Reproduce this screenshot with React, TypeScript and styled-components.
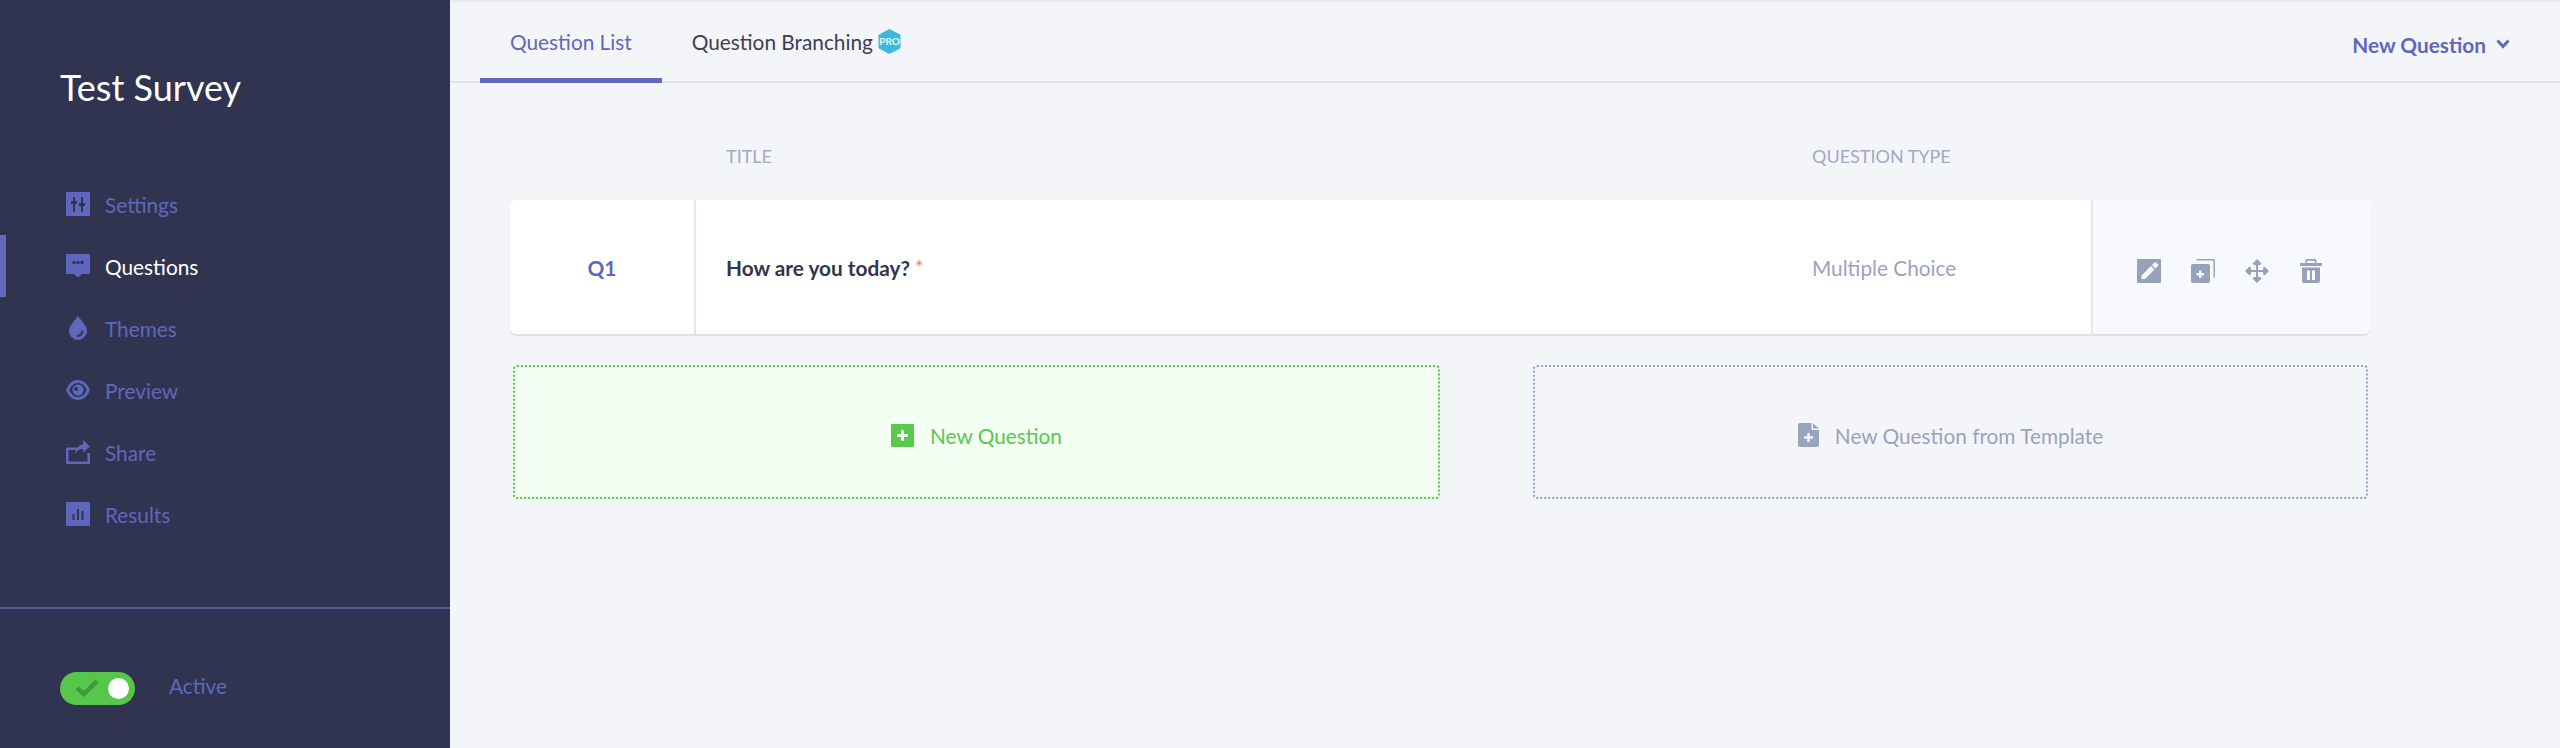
import { ReactNode } from 'react'
import styled, { createGlobalStyle } from 'styled-components'

const GlobalStyle = createGlobalStyle`
  html, body {
    margin: 0;
    padding: 0;
    background: #f4f5f9;
  }
  body {
    font-family: Lato, "Open Sans", sans-serif;
    overflow: hidden;
  }
`

const Page = styled.div`
  display: flex;
  width: 100%;
  height: 748px;
  overflow: hidden;
`

const Sidebar = styled.aside`
  display: flex;
  flex-direction: column;
  flex: 0 0 450px;
  background: #313450;
`

const SurveyTitle = styled.h1`
  margin: 0;
  padding: 65px 0 0 60px;
  font-size: 36px;
  line-height: 44px;
  font-weight: 400;
  color: #ffffff;
`

const Nav = styled.nav`
  display: flex;
  flex-direction: column;
  padding-top: 64px;
  flex: 1;
`

const NavItem = styled.a<{ $active?: boolean }>`
  display: flex;
  align-items: center;
  gap: 15px;
  height: 62px;
  padding-left: ${p => (p.$active ? 60 : 66)}px;
  border-left: ${p => (p.$active ? '6px solid #6469bb' : 'none')};
  font-size: 20.8px;
  color: ${p => (p.$active ? '#ffffff' : '#5f68bb')};
  svg {
    flex: 0 0 24px;
    color: #5f67bd;
  }
`

const SidebarFooter = styled.div`
  display: flex;
  align-items: center;
  gap: 34px;
  height: 141px;
  padding: 19px 0 0 60px;
  border-top: 2px solid #575c96;
  box-sizing: border-box;
  font-size: 20.8px;
  color: #5f68bb;
`

const ActiveLabel = styled.span`
  padding-bottom: 5px;
`

const Toggle = styled.div`
  display: flex;
  align-items: center;
  justify-content: space-between;
  width: 75px;
  height: 33px;
  padding: 0 6px 0 15px;
  box-sizing: border-box;
  border-radius: 17px;
  background: #56c74a;
`

const ToggleKnob = styled.span`
  width: 21px;
  height: 21px;
  border-radius: 50%;
  background: #ffffff;
`

const Main = styled.main`
  display: flex;
  flex-direction: column;
  flex: 1;
  min-width: 0;
  box-shadow: inset 0 2px 0 #e9eaf1;
`

const TabBar = styled.div`
  display: flex;
  align-items: stretch;
  height: 83px;
  padding: 0 50px 0 30px;
  box-sizing: border-box;
  box-shadow: inset 0 -2px 0 #e1e2ea;
`

const Tab = styled.a<{ $active?: boolean }>`
  display: flex;
  align-items: center;
  gap: 5px;
  padding: 5px 30px 0;
  border-bottom: 5px solid ${p => (p.$active ? '#6469bb' : 'transparent')};
  font-size: 20.8px;
  color: ${p => (p.$active ? '#5f67bd' : '#3c3f52')};
`

const NewMenu = styled.a`
  display: flex;
  align-items: center;
  gap: 10px;
  margin-left: auto;
  padding-top: 5px;
  font-size: 20.8px;
  font-weight: 700;
  color: #5f67bd;
`

const Content = styled.div`
  padding: 63px 190px 0 60px;
`

const Columns = styled.div`
  display: grid;
  grid-template-columns: 186px 1116px 279px 279px;
`

const HeaderLabel = styled.div<{ $inset?: number }>`
  grid-column: ${p => (p.$inset ? 3 : 2)};
  padding-left: ${p => (p.$inset ? 0 : 30)}px;
  font-size: 18px;
  line-height: 20px;
  color: #a2a9c2;
`

const Card = styled(Columns)`
  height: 134px;
  margin-top: 34px;
  border-radius: 6px;
  background: #ffffff;
  box-shadow: 0 2px 0 #dfe0e8;
`

const NumberCell = styled.div`
  display: flex;
  align-items: center;
  justify-content: center;
  border-right: 2px solid #e6e7ee;
  font-size: 20.8px;
  font-weight: 700;
  color: #5f67bd;
`

const TitleCell = styled.div`
  display: flex;
  align-items: center;
  padding-left: 30px;
  font-size: 20.8px;
  font-weight: 700;
  color: #33364b;
`

const Required = styled.span`
  margin: -2px 0 0 5px;
  font-size: 20px;
  font-weight: 400;
  color: #f47b74;
`

const TypeCell = styled.div`
  display: flex;
  align-items: center;
  font-size: 20.8px;
  color: #9aa3bd;
`

const ActionsCell = styled.div`
  display: flex;
  align-items: center;
  gap: 30px;
  padding: 8px 0 0 44px;
  border-left: 2px solid #e6e7ee;
  border-radius: 0 6px 6px 0;
  background: #f8f9fd;
  color: #98a1ba;
`

const AddRow = styled.div`
  display: grid;
  grid-template-columns: 927px 835px;
  justify-content: space-between;
  margin-top: 31px;
  padding: 0 2px 0 3px;
`

const AddButton = styled.button<{ $primary?: boolean }>`
  display: flex;
  align-items: center;
  justify-content: center;
  gap: 16px;
  height: 134px;
  padding: 6px 0 0;
  border: 2px dotted ${p => (p.$primary ? '#56c74a' : '#9aa3bd')};
  border-radius: 4px;
  background: ${p => (p.$primary ? '#f4fff3' : 'transparent')};
  font-family: inherit;
  font-size: 20.8px;
  color: ${p => (p.$primary ? '#5ac84e' : '#9aa3bd')};
`

function Glyph({ size = 24, children }: { size?: number; children: ReactNode }) {
  return (
    <svg width={size} height={size} viewBox="0 0 24 24" fill="currentColor" fillRule="evenodd">
      {children}
    </svg>
  )
}

const SettingsIcon = () => (
  <Glyph>
    <path d="M1 0h22a1 1 0 0 1 1 1v22a1 1 0 0 1-1 1H1a1 1 0 0 1-1-1V1a1 1 0 0 1 1-1ZM7 5v4H5v3h2v8h2v-8h2V9H9V5H7Zm8 0v6h-2v3h2v6h2v-6h2v-3h-2V5h-2Z" />
  </Glyph>
)

const QuestionsIcon = () => (
  <Glyph>
    <path d="M1 0h22a1 1 0 0 1 1 1v18a1 1 0 0 1-1 1h-7l-4 3.500L8 20H1a1 1 0 0 1-1-1V1a1 1 0 0 1 1-1Zm5.500 7v3h3V7h-3Zm4 0v3h3V7h-3Zm4 0v3h3V7h-3Z" />
  </Glyph>
)

const ThemesIcon = () => (
  <Glyph>
    <path d="M12 0c3 4.500 9 9.500 9 15a9 9 0 0 1-18 0C3 9.500 9 4.500 12 0Zm3.500 14.500c0 2.500-1.600 4.200-4.500 4.500v2c4 0 6.500-2.800 6.500-6.500h-2Z" />
  </Glyph>
)

const PreviewIcon = () => (
  <Glyph>
    <path d="M12 2c5.500 0 9.500 4 12 10-2.500 6-6.500 10-12 10S2.500 18 0 12C2.500 6 6.500 2 12 2Zm0 3c-3.800 0-6.800 2.600-8.800 7 2 4.400 5 7 8.800 7s6.800-2.600 8.800-7c-2-4.400-5-7-8.800-7Zm0 1.500a5.500 5.500 0 1 1 0 11 5.500 5.500 0 0 1 0-11Zm-2 2.500a2 2 0 1 0 0 4 2 2 0 0 0 0-4Z" />
  </Glyph>
)

const ShareIcon = () => (
  <Glyph>
    <path d="M0 7.500h11V10H2.500v11.500h19V13H24v10a1 1 0 0 1-1 1H1a1 1 0 0 1-1-1V7.500Z" />
    <path d="M17 0l7 6.500-7 6V9c-3.500 0-6 1.500-8 5.500C9.500 9 12.500 5 17 4.500V0Z" />
  </Glyph>
)

const ResultsIcon = () => (
  <Glyph>
    <path d="M1 0h22a1 1 0 0 1 1 1v22a1 1 0 0 1-1 1H1a1 1 0 0 1-1-1V1a1 1 0 0 1 1-1Zm10 7v11h2V7h-2ZM6.500 12v6h2v-6h-2Zm9-3v9h2V9h-2Z" />
  </Glyph>
)

const EditIcon = () => (
  <Glyph>
    <path d="M1 0h22a1 1 0 0 1 1 1v22a1 1 0 0 1-1 1H1a1 1 0 0 1-1-1V1a1 1 0 0 1 1-1Zm16.500 3.500-2.500 2.500 3.500 3.500L21 7a1 1 0 0 0 0-1.500l-2-2a1 1 0 0 0-1.500 0ZM14 7 4.500 16.500V20H8l9.500-9.500L14 7Z" />
  </Glyph>
)

const DuplicateIcon = () => (
  <Glyph>
    <path d="M7 0h15a2 2 0 0 1 2 2v15a2 2 0 0 1-1.500 2V2.500a1 1 0 0 0-1-1H5A2 2 0 0 1 7 0Z" />
    <path d="M2 5h15a2 2 0 0 1 2 2v15a2 2 0 0 1-2 2H2a2 2 0 0 1-2-2V7a2 2 0 0 1 2-2Zm6 6.500V14H5.500v2.500H8V19h2.500v-2.500H13V14h-2.500v-2.500H8Z" />
  </Glyph>
)

const MoveIcon = () => (
  <Glyph>
    <path d="m12 0 4.500 4.500-1.500 1.500h-2v5h5V9l1.500-1.500L24 12l-4.500 4.500L18 15v-2h-5v5h2l1.500 1.500L12 24l-4.500-4.500L9 18h2v-5H6v2l-1.500 1.500L0 12l4.500-4.500L6 9v2h5V6H9L7.500 4.500 12 0Z" />
  </Glyph>
)

const TrashIcon = () => (
  <Glyph>
    <path d="M8 0h8a1.500 1.500 0 0 1 1.500 1.500V4H23v3H1V4h5.500V1.500A1.500 1.500 0 0 1 8 0Zm0 1.700V4h8V1.700H8ZM3 8.500h18V22a2 2 0 0 1-2 2H5a2 2 0 0 1-2-2V8.500Zm5 3V21h3v-9.500H8Zm5 0V21h3v-9.500h-3Z" />
  </Glyph>
)

const PlusSquareIcon = () => (
  <svg width={23} height={23} viewBox="0 0 24 24" fill="currentColor" fillRule="evenodd">
    <path d="M1 0h22a1 1 0 0 1 1 1v22a1 1 0 0 1-1 1H1a1 1 0 0 1-1-1V1a1 1 0 0 1 1-1Zm9.500 6.500V10.500H6.500v3h4v4h3v-4h4v-3h-4v-4h-3Z" />
  </svg>
)

const TemplateIcon = () => (
  <svg width={21} height={24} viewBox="0 0 21 24" fill="currentColor" fillRule="evenodd">
    <path d="M2 0h11.500v7h7.500v15a2 2 0 0 1-2 2H2a2 2 0 0 1-2-2V2a2 2 0 0 1 2-2Zm13 .5L21 5.500h-6V.5ZM9.300 10v3.300H6v2.400h3.300V19h2.400v-3.300H15v-2.400h-3.300V10H9.300Z" />
  </svg>
)

const ProBadge = () => (
  <svg width={23} height={25} viewBox="0 0 23 25">
    <path d="M11.500 0.500 22 6v13l-10.500 5.500L1 19V6Z" fill="#3fb8e0" stroke="#3fb8e0" strokeLinejoin="round" />
    <text x="11.500" y="16" textAnchor="middle" fontFamily="Lato, sans-serif" fontSize="10" fontWeight="700" fill="#e8f8fd">
      PRO
    </text>
  </svg>
)

const navItems = [
  { label: 'Settings', icon: <SettingsIcon /> },
  { label: 'Questions', icon: <QuestionsIcon />, active: true },
  { label: 'Themes', icon: <ThemesIcon /> },
  { label: 'Preview', icon: <PreviewIcon /> },
  { label: 'Share', icon: <ShareIcon /> },
  { label: 'Results', icon: <ResultsIcon /> },
]

function App() {
  return (
    <Page>
      <GlobalStyle />
      <Sidebar>
        <SurveyTitle>Test Survey</SurveyTitle>
        <Nav>
          {navItems.map(item => (
            <NavItem key={item.label} $active={item.active}>
              {item.icon}
              {item.label}
            </NavItem>
          ))}
        </Nav>
        <SidebarFooter>
          <Toggle>
            <svg width={24} height={18} viewBox="0 0 24 18" fill="none">
              <path d="M2 9l7 6L22 2" stroke="#3f9a3e" strokeWidth="4.500" />
            </svg>
            <ToggleKnob />
          </Toggle>
          <ActiveLabel>Active</ActiveLabel>
        </SidebarFooter>
      </Sidebar>
      <Main>
        <TabBar>
          <Tab $active>Question List</Tab>
          <Tab>
            Question Branching
            <ProBadge />
          </Tab>
          <NewMenu>
            New Question
            <svg width={14} height={10} viewBox="0 0 14 10" fill="none">
              <path d="M1.500 1.500 7 7.500l5.500-6" stroke="currentColor" strokeWidth="3" />
            </svg>
          </NewMenu>
        </TabBar>
        <Content>
          <Columns>
            <HeaderLabel>TITLE</HeaderLabel>
            <HeaderLabel $inset={1}>QUESTION TYPE</HeaderLabel>
          </Columns>
          <Card>
            <NumberCell>Q1</NumberCell>
            <TitleCell>
              How are you today?
              <Required>*</Required>
            </TitleCell>
            <TypeCell>Multiple Choice</TypeCell>
            <ActionsCell>
              <EditIcon />
              <DuplicateIcon />
              <MoveIcon />
              <TrashIcon />
            </ActionsCell>
          </Card>
          <AddRow>
            <AddButton $primary>
              <PlusSquareIcon />
              New Question
            </AddButton>
            <AddButton>
              <TemplateIcon />
              New Question from Template
            </AddButton>
          </AddRow>
        </Content>
      </Main>
    </Page>
  )
}

export default App
